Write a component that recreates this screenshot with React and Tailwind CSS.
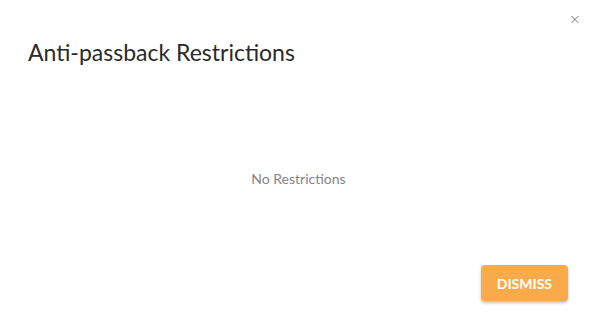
import React from "react";

export default function App() {
  return (
    <div className="w-[597px] h-[314px] bg-white flex flex-col font-['Lato','Liberation_Sans',sans-serif] relative">
      <button className="absolute right-[18px] top-[15px] w-[8px] h-[8px] flex items-center justify-center text-[#757575]">
        <svg width="9" height="9" viewBox="0 0 9 9" fill="none" stroke="currentColor" strokeWidth="1.1">
          <path d="M0.5 0.5L8.5 8.5M8.5 0.5L0.5 8.5" />
        </svg>
      </button>
      <div className="pl-[28px] pt-[37px]">
        <h2 className="text-[23px] leading-[30px] text-[#2b2b2b]">Anti-passback Restrictions</h2>
      </div>
      <div className="flex-1 flex items-center justify-center pt-[24px]">
        <p className="text-[14px] text-[#858585]">No Restrictions</p>
      </div>
      <div className="flex justify-end pr-[29px] pb-[13px]">
        <button className="h-[36px] px-[16px] rounded-[4px] bg-[#f9ab4b] text-white font-bold text-[14px] shadow-[0_2px_3px_rgba(0,0,0,0.25)]">
          DISMISS
        </button>
      </div>
    </div>
  );
}
